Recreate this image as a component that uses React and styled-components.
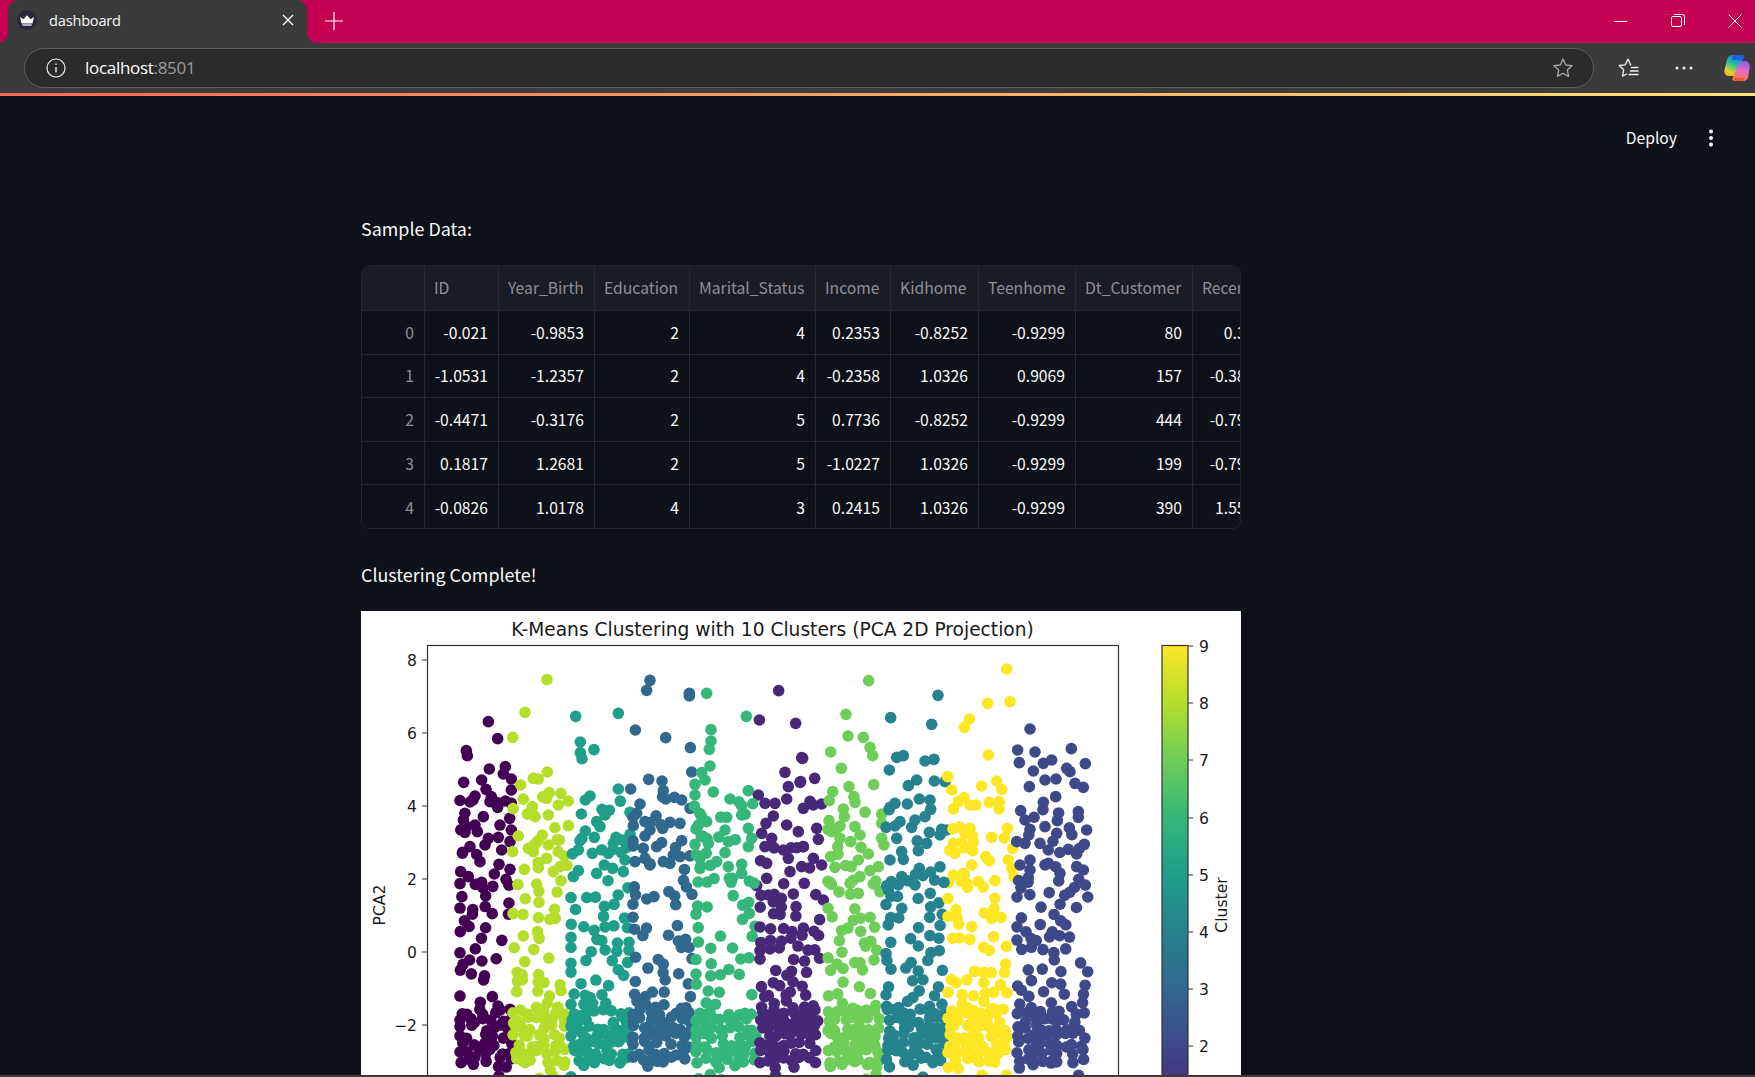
import React from 'react';
import styled, { createGlobalStyle } from 'styled-components';

const Global = createGlobalStyle`
  html, body { margin: 0; padding: 0; background: #0e1117; }
  #root { width: 1755px; height: 1077px; overflow: hidden; }
`;

const Page = styled.div`
  width: 1755px; height: 1077px; display: flex; flex-direction: column; overflow: hidden;
  background: #0e1117; font-family: "Noto Sans CJK JP", "Noto Sans", sans-serif;
`;
const TitleBar = styled.div`
  height: 43px; flex: none; background: #c50052; display: flex; align-items: flex-start; padding-left: 8px;
`;
const Tab = styled.div`
  position: relative; width: 299px; height: 43px; background: #3b3b3b; border-radius: 10px 10px 0 0;
  display: flex; align-items: center; padding: 0 13px 3px 9px; box-sizing: border-box; color: #f5f5f5;
  &::before, &::after { content: ""; position: absolute; bottom: 0; width: 10px; height: 10px; }
  &::before { right: 100%; background: radial-gradient(circle at 0 0, transparent 9.5px, #3b3b3b 10px); }
  &::after { left: 100%; background: radial-gradient(circle at 100% 0, transparent 9.5px, #3b3b3b 10px); }
`;
const TabTitle = styled.span`
  flex: 1; margin-left: 12px; font: 400 14.6px "Open Sans", sans-serif; letter-spacing: -0.2px;
`;
const NewTab = styled.div`
  margin-left: 18px; width: 18px; height: 42px; display: flex; align-items: center; justify-content: center;
`;
const WindowControls = styled.div`
  margin-left: auto; display: flex; align-items: center; height: 42px; padding-right: 13px; gap: 43px;
`;
const Toolbar = styled.div`
  height: 50px; flex: none; background: #3b3b3b; display: flex; align-items: flex-start;
  padding: 5px 0 0 24px; box-sizing: border-box;
`;
const AddressBar = styled.div`
  width: 1570px; height: 40px; box-sizing: border-box; background: #2b2b2b; border: 1px solid #5c5c5c;
  border-radius: 20px; display: flex; align-items: center; padding: 0 19px 0 21px;
`;
const Url = styled.div`
  flex: 1; margin: 0 0 2px 19px; font: 400 17px "Open Sans", sans-serif; letter-spacing: -0.3px; color: #fff;
  span { color: #9b9b9b; }
`;
const ToolActions = styled.div`
  flex: 1; display: flex; align-items: center; height: 40px; padding-left: 24px; gap: 29px;
`;
const Accent = styled.div`
  height: 3px; flex: none; background: linear-gradient(to right, #ff6a55, #ffe27a);
`;
const Main = styled.div`
  flex: 1; min-height: 0; overflow: hidden; position: relative;
`;
const AppHeader = styled.div`
  height: 84px; box-sizing: border-box; display: flex; justify-content: flex-end; align-items: center;
  padding: 0 42px 0 0; gap: 32px; color: #fafafa; font-size: 15.7px; line-height: 20px;
`;
const Column = styled.div`
  width: 880px; margin-left: 361px; display: flex; flex-direction: column; color: #fafafa;
`;
const Paragraph = styled.p`
  margin: 0; font-size: 17.9px; line-height: 28px; font-weight: 400; height: 28px;
`;
const TableWrap = styled.div`
  margin-top: 23px; width: 880px; height: 264px; box-sizing: border-box; overflow: hidden;
  border: 1px solid #23252d; border-radius: 9px;
`;
const Row = styled.div`
  display: grid; width: 914px; margin-left: -1px;
  grid-template-columns: 64px 74px 96px 95px 126px 75px 88px 97px 117px 81px;
  height: ${p => p.$h}px; box-sizing: border-box; border-bottom: 1px solid #262831;
  background: ${p => (p.$head ? '#1a1c24' : '#0e1117')};
  &:last-child { border-bottom: 0; }
`;
const Cell = styled.div`
  padding: 0 10px ${p => (p.$left ? '2px' : '0')} 9px; display: flex; align-items: center;
  justify-content: ${p => (p.$left ? 'flex-start' : 'flex-end')};
  border-right: 1px solid #262831; font-size: 15.7px; white-space: nowrap; overflow: hidden;
  color: ${p => (p.$muted ? '#8e9096' : '#fafafa')};
`;
const SectionLabel = styled(Paragraph)`
  margin-top: 31px;
`;
const Figure = styled.div`
  margin-top: 23px; width: 880px; height: 464px; background: #fff; flex: none;
  svg { display: block; }
`;
const BottomEdge = styled.div`
  height: 2px; flex: none; background: #3b3b3b;
`;

const z5 = {
  '#440154': [[385,365],[413,416],[319,452],[322,467],[388,507],[436,500],[430,522],[454,537],[311,547],[365,540],[378,568],[394,590],[345,588],[330,606],[413,622],[436,603],[454,610],[454,570],[449,655],[370,650],[310,660],[345,675],[320,680],[352,695],[454,690],[315,697],[385,715],[415,712],[375,735],[330,740],[308,757],[425,750],[450,725],[360,785],[417,793],[450,808],[403,822],[302,815],[325,830],[365,847],[438,838]],
  '#b5de2b': [[458,412],[495,337],[561,239],[482,555],[520,535],[535,537],[562,516],[568,578],[560,595],[603,580],[625,603],[595,615],[565,645],[517,620],[512,635],[525,650],[625,677],[475,708],[458,755],[547,705],[598,720],[525,732],[505,745],[520,755],[565,735],[560,775],[595,755],[612,768],[535,803],[600,800],[580,815],[530,852]],
  '#1f9e89': [[647,349],[775,340],[661,426],[661,458],[702,449],[666,476],[775,567],[690,588],[676,600],[664,642],[735,645],[710,665],[720,680],[676,693],[660,722],[655,750],[703,712],[768,712],[760,730],[697,760],[745,760],[810,637],[810,703],[800,742],[795,780],[733,795],[790,815],[655,812],[640,830],[710,820]],
  '#31688e': [[870,241],[860,271],[988,280],[988,288],[826,390],[917,413],[991,443],[995,516],[866,538],[812,567],[906,543],[910,572],[917,597],[943,592],[965,600],[840,612],[990,625],[830,640],[855,665],[820,677],[870,690],[855,708],[908,685],[930,667],[960,670],[965,722],[890,740],[905,728],[820,738],[850,745],[825,785],[855,775],[870,795],[910,785],[930,790],[940,765],[960,770]],
  '#35b779': [[1040,280],[1159,349],[1053,389],[1053,423],[1048,448],[1050,498],[1025,518],[1035,540],[1005,553],[1005,585],[1060,576],[1165,572],[1110,597],[1003,618],[1145,617],[1145,645],[1100,652],[1025,650],[1040,665],[1015,675],[1095,690],[1165,685],[1030,710],[1005,733],[1045,730],[1105,725],[1175,715],[1165,740],[1095,758],[1070,785],[1020,775],[1145,793],[1105,800],[1020,805],[1145,820],[1108,835]],
  '#482878': [[1198,360],[1256,272],[1307,370],[1325,473],[1275,517],[1320,547],[1285,560],[1195,585],[1215,610],[1245,610],[1280,597],[1330,625],[1240,648],[1218,670],[1280,675],[1205,700],[1315,695],[1235,715],[1215,740],[1270,750],[1330,740],[1285,775],[1220,790],[1325,800],[1290,815],[1220,835],[1190,857],[1225,885]],
};
const z6 = {
  '#482878': [[8,475],[2,545],[44,535],[50,685],[55,718],[10,740],[40,615],[65,612],[40,775],[65,795],[70,900]],
  '#6ece58': [[206,242],[138,343],[144,408],[190,412],[92,456],[210,442],[218,467],[124,505],[147,560],[221,554],[98,575],[162,590],[165,607],[130,627],[87,662],[133,650],[165,680],[180,705],[245,670],[110,685],[95,695],[120,715],[152,725],[245,715],[252,735],[113,740],[183,742],[205,762],[92,770],[175,780],[105,802],[235,800],[210,812],[180,830],[90,847],[150,850],[220,852],[175,880],[240,875]],
  '#26828e': [[414,286],[272,353],[395,373],[310,467],[290,472],[375,483],[402,478],[268,510],[403,543],[435,545],[350,540],[325,557],[358,597],[390,600],[285,610],[270,622],[322,612],[392,628],[375,650],[345,660],[300,665],[285,678],[258,682],[335,682],[388,697],[440,690],[420,705],[380,730],[290,715],[305,755],[355,752],[270,780],[310,778],[358,805],[392,816],[305,830],[295,855],[265,870],[345,855]],
  '#fde725': [[620,207],[630,305],[563,310],[508,357],[493,382],[565,465],[443,530],[590,543],[545,558],[605,568],[455,570],[475,605],[510,615],[528,615],[568,607],[598,605],[597,627],[460,627],[622,685],[510,685],[495,700],[575,712],[520,725],[460,730],[518,752],[465,760],[557,770],[638,745],[625,780],[515,795],[635,805],[642,830],[460,825],[490,820],[585,842],[445,848],[535,845],[500,850]],
  '#3e4989': [[690,387],[653,450],[705,456],[814,446],[658,488],[755,480],[730,490],[856,491],[800,505],[700,513],[735,540],[768,537],[810,515],[825,550],[850,562],[688,560],[767,590],[730,607],[662,632],[835,635],[835,652],[675,660],[772,662],[690,688],[860,690],[735,680],[770,700],[650,725],[675,730],[720,730],[853,733],[745,750],[805,748],[660,795],[830,762],[690,780],[745,790],[690,810],[780,820],[830,800],[850,810]],
};
const bands = [
  ['#440154', 459, 513, 0.72],
  ['#b5de2b', 512, 568, 0.56],
  ['#1f9e89', 570, 630, 0.66],
  ['#31688e', 632, 693, 0.64],
  ['#35b779', 695, 757, 0.56],
  ['#482878', 759, 825, 0.74],
  ['#6ece58', 827, 883, 0.62],
  ['#26828e', 885, 945, 0.66],
  ['#fde725', 947, 1012, 0.56],
  ['#3e4989', 1016, 1089, 0.62],
];
function rng(seed) {
  let s = seed;
  return () => {
    s = (s + 0x6d2b79f5) | 0;
    let t = Math.imul(s ^ (s >>> 15), 1 | s);
    t = (t + Math.imul(t ^ (t >>> 7), 61 | t)) ^ t;
    return ((t ^ (t >>> 14)) >>> 0) / 4294967296;
  };
}
function buildDots() {
  const dots = [];
  Object.entries(z5).forEach(([c, l]) => l.forEach(([x, y]) => dots.push([360 + x / 3, 600 + y / 3, c])));
  Object.entries(z6).forEach(([c, l]) => l.forEach(([x, y]) => dots.push([800 + x / 3, 600 + y / 3, c])));
  const r = rng(4711);
  bands.forEach(([c, a, b, p]) => {
    const coarse = {};
    const weight = (x, y) => {
      const k = `${Math.floor(x / 28)}_${Math.floor(y / 28)}`;
      if (!(k in coarse)) coarse[k] = 0.55 + r() * 0.95;
      return coarse[k];
    };
    const fill = (y0, y1, step, prob, jitter, clumpy) => {
      for (let y = y0; y < y1; y += step) {
        for (let x = a + 2; x <= b - 2; x += step) {
          if (r() < prob * (clumpy ? weight(x, y) : 1)) {
            const px = x + (r() - 0.5) * jitter;
            dots.push([Math.min(b - 1, Math.max(a + 1, px)), y + (r() - 0.5) * jitter, c]);
          }
        }
      }
    };
    fill(800, 884, 13, 0.3, 9, true);
    fill(884, 1012, 11, p, 8, true);
    fill(1012, 1066, 8, 0.93, 6, false);
    fill(1066, 1082, 12, 0.42, 7, false);
  });
  return dots;
}
const dots = buildDots();
const viridis = ['#fde725','#b5de2b','#6ece58','#35b779','#1f9e89','#26828e','#31688e','#3e4989','#482878','#440154'];
const yTicks = [[8,660],[6,733],[4,806],[2,879],[0,952],['−2',1025]];
const cbTicks = [[9,646],[8,703],[7,760],[6,818],[5,875],[4,932],[3,989],[2,1046]];

function Plot() {
  return (
    <svg width="880" height="464" viewBox="361 611 880 464" fontFamily='"DejaVu Sans", sans-serif' fill="#1a1a1a">
      <defs>
        <linearGradient id="vir" gradientUnits="userSpaceOnUse" x1="0" x2="0" y1="645" y2="1159">
          {viridis.map((c, i) => <stop key={c} offset={i / 9} stopColor={c} />)}
        </linearGradient>
        <clipPath id="axes"><rect x="427" y="645" width="691" height="440" /></clipPath>
      </defs>
      <text x="772.500" y="636" fontSize="18.640" textAnchor="middle">K-Means Clustering with 10 Clusters (PCA 2D Projection)</text>
      <g clipPath="url(#axes)">
        {dots.map(([x, y, c], i) => <circle key={i} cx={x} cy={y} r="5.800" fill={c} />)}
      </g>
      <rect x="427.500" y="645.500" width="691" height="440" fill="none" stroke="#333" strokeWidth="1.200" />
      {yTicks.map(([l, y]) => (
        <g key={l}>
          <line x1="422" x2="427" y1={y} y2={y} stroke="#333" />
          <text x="417" y={y + 6} fontSize="15.600" textAnchor="end">{l}</text>
        </g>
      ))}
      <text transform="translate(385 905) rotate(-90)" fontSize="15.600" textAnchor="middle">PCA2</text>
      <rect x="1162" y="645.500" width="26" height="514" fill="url(#vir)" stroke="#333" strokeWidth="1.200" />
      {cbTicks.map(([l, y]) => (
        <g key={l}>
          <line x1="1188" x2="1193" y1={y} y2={y} stroke="#333" />
          <text x="1199" y={y + 6} fontSize="15.600">{l}</text>
        </g>
      ))}
      <text transform="translate(1227 905) rotate(-90)" fontSize="15.600" textAnchor="middle">Cluster</text>
    </svg>
  );
}

const Thin = ({ size = 14, children, vb }) => (
  <svg width={size} height={size} viewBox={vb || `0 0 ${size} ${size}`} fill="none" stroke="#fff" strokeWidth="1">{children}</svg>
);

const CrownFavicon = () => (
  <svg width="20" height="20" viewBox="0 0 20 20">
    <circle cx="10" cy="10" r="10" fill="#29293d" />
    <path d="M3 7l3.400 2.200L10 5.200l3.600 4L17 7l-1.600 6.400H4.600z" fill="#fff" />
    <path d="M5 14.200h10l-.6 1.600H5.600z" fill="#dcdcdc" />
  </svg>
);
const FavoritesIcon = () => (
  <svg width="22" height="22" viewBox="0 0 22 22" fill="none" stroke="#f2f2f2" strokeWidth="1.300" strokeLinejoin="round">
    <path d="M12.800 8.500L10 2 7.300 7.800 1.200 8.500l4.500 4.300-1.200 6.400 4.500-2.500" />
    <path d="M13 10.500h7.500M12 14h8.500M10.500 17.500h10" />
  </svg>
);
const Copilot = () => (
  <svg width="28" height="28" viewBox="0 0 28 28">
    <defs>
      <linearGradient id="cpL" x1="0.700" y1="0" x2="0.200" y2="1">
        <stop offset="0" stopColor="#1b6fe8" />
        <stop offset="0.450" stopColor="#25c2a0" />
        <stop offset="0.800" stopColor="#d8d82a" />
        <stop offset="1" stopColor="#f2b01e" />
      </linearGradient>
      <linearGradient id="cpR" x1="0.600" y1="0" x2="0.400" y2="1">
        <stop offset="0" stopColor="#8a5cf0" />
        <stop offset="0.500" stopColor="#e86fc0" />
        <stop offset="1" stopColor="#ff7a45" />
      </linearGradient>
    </defs>
    <path d="M9 1h9c2 0 3 1 2.600 2.500L15 18c-1 3-3 4-5 4H6c-3 0-5-2-4.600-5.500L4 6c.6-3 2.600-5 5-5z" fill="url(#cpL)" />
    <path d="M21 7h1c3 0 5 2.600 4.700 5.500L25.500 22c-.5 3.300-2.500 5-5.500 5H12c-2 0-3-1.200-2.500-2.800L15 11c.8-2.600 3-4 6-4z" fill="url(#cpR)" />
    <path d="M12 27h6c2 0 3-1 3.500-3l-9-.5c-1.500 0-2.500 3.500-.5 3.500z" fill="#f0553a" />
    <path d="M11 1h7.500c2 0 2.800 1 2.400 2.400L20 6H9.500c-.8-2.500-.3-5 1.500-5z" fill="#1a62e0" />
  </svg>
);

const headers = ['', 'ID', 'Year_Birth', 'Education', 'Marital_Status', 'Income', 'Kidhome', 'Teenhome', 'Dt_Customer', 'Recency'];
const rows = [
  ['0', '-0.021', '-0.9853', '2', '4', '0.2353', '-0.8252', '-0.9299', '80', '0.307'],
  ['1', '-1.0531', '-1.2357', '2', '4', '-0.2358', '1.0326', '0.9069', '157', '-0.3831'],
  ['2', '-0.4471', '-0.3176', '2', '5', '0.7736', '-0.8252', '-0.9299', '444', '-0.7982'],
  ['3', '0.1817', '1.2681', '2', '5', '-1.0227', '1.0326', '-0.9299', '199', '-0.7982'],
  ['4', '-0.0826', '1.0178', '4', '3', '0.2415', '1.0326', '-0.9299', '390', '1.5518'],
];

export default function App() {
  return (
    <Page>
      <Global />
      <TitleBar>
        <Tab>
          <CrownFavicon />
          <TabTitle>dashboard</TabTitle>
          <Thin size={12}><path d="M1 1l10 10M11 1L1 11" strokeWidth="1.300" /></Thin>
        </Tab>
        <NewTab><Thin size={18}><path d="M9 0v18M0 9h18" strokeWidth="1.200" /></Thin></NewTab>
        <WindowControls>
          <Thin size={14}><path d="M0 7.500h13" /></Thin>
          <Thin size={14}>
            <rect x="0.500" y="2.500" width="10" height="10" rx="1.500" />
            <path d="M3 .5h8.500a2 2 0 0 1 2 2V11" />
          </Thin>
          <Thin size={14}><path d="M.5.5l13 13M13.500.5l-13 13" /></Thin>
        </WindowControls>
      </TitleBar>
      <Toolbar>
        <AddressBar>
          <svg width="20" height="20" viewBox="0 0 20 20" fill="none" stroke="#f0f0f0" strokeWidth="1.200" style={{ flex: 'none' }}>
            <circle cx="10" cy="10" r="9" />
            <path d="M10 9v5.500M10 5.500v1.500" strokeWidth="1.400" />
          </svg>
          <Url>localhost<span>:8501</span></Url>
          <svg width="22" height="22" viewBox="0 0 22 22" fill="none" stroke="#a8a8a8" strokeWidth="1.300" strokeLinejoin="round">
            <path d="M11 2l2.700 6 6.300.7-4.700 4.300 1.300 6.400L11 16.200l-5.600 3.200 1.300-6.400L2 8.700 8.300 8z" />
          </svg>
        </AddressBar>
        <ToolActions>
          <FavoritesIcon />
          <svg width="20" height="22" viewBox="0 0 20 22" fill="#f0f0f0" style={{ marginLeft: 5 }}>
            <circle cx="3" cy="11" r="1.500" /><circle cx="10" cy="11" r="1.500" /><circle cx="17" cy="11" r="1.500" />
          </svg>
          <Copilot />
        </ToolActions>
      </Toolbar>
      <Accent />
      <Main>
        <AppHeader>
          <span>Deploy</span>
          <svg width="4" height="18" viewBox="0 0 4 18" fill="#fafafa">
            <circle cx="2" cy="2.500" r="2" /><circle cx="2" cy="9" r="2" /><circle cx="2" cy="15.500" r="2" />
          </svg>
        </AppHeader>
        <Column>
          <Paragraph style={{ marginTop: 34 }}>Sample Data:</Paragraph>
          <TableWrap>
            <Row $head $h={45}>
              {headers.map((h, i) => <Cell key={i} $left $muted>{h}</Cell>)}
            </Row>
            {rows.map(r => (
              <Row key={r[0]} $h={43.6}>
                {r.map((v, i) => <Cell key={i} $muted={i === 0}>{v}</Cell>)}
              </Row>
            ))}
          </TableWrap>
          <SectionLabel>Clustering Complete!</SectionLabel>
          <Figure><Plot /></Figure>
        </Column>
      </Main>
      <BottomEdge />
    </Page>
  );
}
